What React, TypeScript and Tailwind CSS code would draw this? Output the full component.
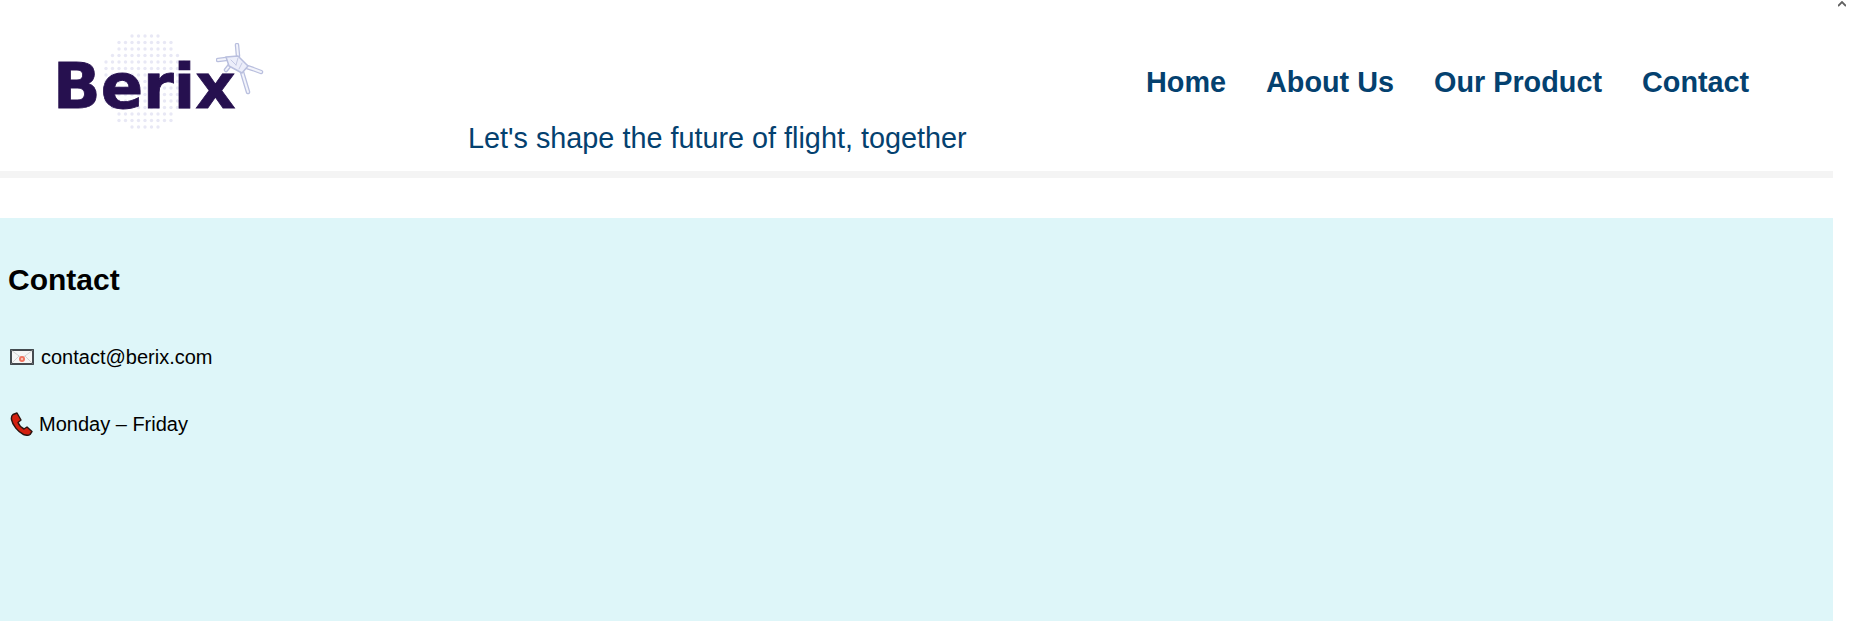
const limbs = "M21 2l1 11M2 17l8-1M31 24l6 2 8 3M26 29l3 10 3 10M14 22l-4 5";

const Logo = () => {
  const dots = [];
  for (let row = 0; row < 15; row++) {
    for (let col = 0; col < 13; col++) {
      const dx = (col - 6) / 6.6;
      const dy = (row - 7) / 7.6;
      if (dx * dx + dy * dy < 1) {
        dots.push(<circle key={`${row}-${col}`} cx={col * 6.5 + 3} cy={row * 6.5 + 3} r="1.7" fill="#e8e8f5" />);
      }
    }
  }

  return (
    <div className="relative w-[225px] h-[115px]">
      <svg viewBox="0 0 84 100" className="absolute left-[58px] top-[11px] w-[84px] h-[100px]">
        {dots}
      </svg>
      <span className="absolute left-[8px] top-[29px] text-[62.5px] leading-[72px] font-bold text-[#26104f] [-webkit-text-stroke:0.8px_#26104f] font-['DejaVu_Sans',sans-serif]">
        Berix
      </span>
      <svg viewBox="0 0 50 54" className="absolute left-[171px] top-[21px] w-[50px] h-[54px] blur-[0.4px]" fill="none" strokeLinejoin="round" strokeLinecap="round">
        <path d={limbs} stroke="#b9bfde" strokeWidth="4.500" />
        <path d={limbs} stroke="#f3f4fb" strokeWidth="2" />
        <path d="M10 14l12-1 10 10-6 7-13-7z" fill="#eceefa" stroke="#b9bfde" strokeWidth="1.500" />
        <path d="M15 17l5 5M22 15l-2 7M26 20l-3 6" stroke="#c4c9e4" strokeWidth="1" />
      </svg>
    </div>
  );
};

const App = () => {
  return (
    <div className="flex h-[621px] overflow-hidden bg-white font-['Liberation_Sans',Arial,sans-serif]">
      <div className="w-[1833px]">
        <header className="relative flex h-[171px] items-start pl-[45px] pt-[22px]">
          <Logo />
          <p className="mt-[100px] ml-[198px] text-[28.8px] leading-[32px] text-[#04416f]">
            Let's shape the future of flight, together
          </p>
          <nav className="absolute left-[1146px] top-[62px] flex gap-[40px] text-[28.8px] leading-[40px] font-bold text-[#04416f]">
            <a>Home</a>
            <a>About Us</a>
            <a>Our Product</a>
            <a>Contact</a>
          </nav>
        </header>
        <div className="h-[7px] bg-[#f4f4f4]" />
        <section className="mt-[40px] h-[403px] bg-[#def6f9] pl-[8px] text-black">
          <h2 className="pt-[45px] text-[30px] leading-[34px] font-bold">Contact</h2>
          <p className="mt-[48px] flex items-center text-[20px] leading-[24px]">
            <svg viewBox="0 0 24 16" className="w-[24px] h-[16px] mr-[7px] ml-[2px]">
              <rect x="1" y="1" width="22" height="14" fill="#f6f6f6" stroke="#33383d" strokeWidth="1.800" />
              <path d="M1.5 1.5L12 9l10.5-7.5M1.5 14.5L9 7M22.5 14.5L15 7" fill="none" stroke="#c9c9c9" strokeWidth="0.8" />
              <circle cx="12" cy="10" r="3" fill="#f0705c" />
              <circle cx="12" cy="10" r="1.200" fill="#f7c2b8" />
            </svg>
            contact@berix.com
          </p>
          <p className="mt-[43px] flex items-center text-[20px] leading-[24px]">
            <svg viewBox="0 0 24 24" className="w-[24px] h-[24px] mr-[5px] ml-[2px]">
              <path d="M3 2.5l4-1.500 4 7-3 2.500c1 2.500 3 5 6 6.500l3-2 5 4.500-2 3c-1.500 1-4 1-6.500 0C8 20 2.500 13 1.500 7.500 1.200 5.500 1.800 3.500 3 2.500z" fill="#d3200f" stroke="#2a1410" strokeWidth="1.400" strokeLinejoin="round" />
            </svg>
            Monday – Friday
          </p>
        </section>
      </div>
      <div className="w-[17px] flex justify-center pt-[1px]">
        <svg viewBox="0 0 8 6" className="w-[8px] h-[6px]">
          <path d="M0 5l4-4 4 4" fill="none" stroke="#606060" strokeWidth="1.800" />
        </svg>
      </div>
    </div>
  );
};

export default App;
